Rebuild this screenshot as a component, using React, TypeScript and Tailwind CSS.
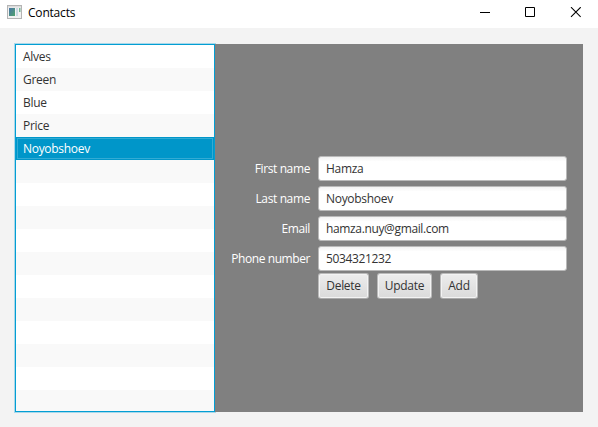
const contacts = ['Alves', 'Green', 'Blue', 'Price', 'Noyobshoev'];
const rows = Array.from({ length: 16 }, (_, i) => contacts[i] ?? '');

const fields = [
  { label: 'First name', value: 'Hamza', track: 'tracking-[-0.38px]', vtrack: 'tracking-[-0.3px]' },
  { label: 'Last name', value: 'Noyobshoev', track: 'tracking-[-0.38px]', vtrack: 'tracking-[-0.3px]' },
  { label: 'Email', value: 'hamza.nuy@gmail.com', track: 'tracking-[-0.38px]', vtrack: 'tracking-[-0.36px]' },
  { label: 'Phone number', value: '5034321232', track: 'tracking-[-0.42px]', vtrack: 'tracking-[-0.36px]' },
];

const buttons = [
  { label: 'Delete', width: 'w-[51px]' },
  { label: 'Update', width: 'w-[55px]' },
  { label: 'Add', width: 'w-[38px]' },
];

function TitleBar() {
  return (
    <header className="flex h-7 shrink-0 items-start bg-white text-black">
      <svg className="ml-[7px] mt-[5px]" width="15" height="14" viewBox="0 0 15 14">
        <defs>
          <linearGradient id="pane" x1="0" y1="0" x2="1" y2="1">
            <stop offset="0" stopColor="#4a74a8" />
            <stop offset="1" stopColor="#4fa36c" />
          </linearGradient>
        </defs>
        <rect x="0.5" y="0.5" width="14" height="13" fill="#f2f2f2" stroke="#b4b4b4" />
        <rect x="1" y="1" width="13" height="1.5" fill="#dcdcdc" />
        <rect x="2" y="3" width="6" height="8" fill="url(#pane)" />
        <rect x="9" y="3" width="2" height="8" fill="#c9d9e2" />
        <rect x="12" y="3" width="1.5" height="4" fill="#74b695" />
      </svg>
      <h1 className="ml-1.5 mt-1 grow leading-[18px] tracking-[-0.2px]">Contacts</h1>
      <svg className="mr-[17px] mt-[7px]" width="101" height="11" viewBox="0 0 101 11" fill="none" stroke="#000">
        <path d="M0 5.5h10M45.5.5h9v9h-9z" />
        <path d="M91 .2l9.7 9.7M100.7.2L91 9.9" strokeWidth="1.1" />
      </svg>
    </header>
  );
}

function ContactList() {
  return (
    <ul className="h-[368px] w-[200px] shrink-0 overflow-hidden border border-[#039ed3] bg-white shadow-[0_0_0_1px_#a9d8ea]">
      {rows.map((name, i) => (
        <li
          key={i}
          className={
            name === 'Noyobshoev'
              ? 'h-[23px] border border-[#0096c9] bg-[#0096c9] text-white'
              : i % 2
                ? 'h-[23px] border border-[#f9f9f9] bg-[#f9f9f9]'
                : 'h-[23px] border border-white bg-white'
          }
        >
          <div
            className={
              name === 'Noyobshoev'
                ? 'h-[21px] border border-[#32abd4] pl-[5px] leading-[19px]'
                : 'h-[21px] border border-transparent pl-[5px] leading-[19px]'
            }
          >
            {name}
          </div>
        </li>
      ))}
    </ul>
  );
}

function ContactForm() {
  return (
    <section className="flex h-[368px] w-[368px] flex-col bg-[#808080] pl-[15px] pr-4 pt-28">
      <div className="flex flex-col gap-[5px]">
        {fields.map((f) => (
          <div key={f.label} className="flex h-[25px] items-center gap-2">
            <label className={`w-20 whitespace-nowrap text-right leading-[25px] text-white ${f.track}`}>{f.label}</label>
            <input
              className={`h-[25px] w-[249px] rounded-[3px] border border-[#b9b9b9] bg-white bg-linear-to-b from-[#f2f2f2] to-white to-20% px-[7px] outline-none ${f.vtrack}`}
              defaultValue={f.value}
            />
          </div>
        ))}
      </div>
      <div className="ml-[88px] mt-0.5 flex gap-2">
        {buttons.map((b) => (
          <button
            key={b.label}
            className={`h-[26px] rounded-[3px] border border-[#bababa] border-b-[#aaaaaa] bg-linear-to-b from-[#ededed] to-[#dadada] leading-6 shadow-[inset_0_0_0_1px_#f3f3f3] ${b.width}`}
          >
            {b.label}
          </button>
        ))}
      </div>
    </section>
  );
}

export default function App() {
  return (
    <div className="flex h-[427px] w-[598px] flex-col overflow-hidden bg-[#f3f3f3] font-['Open_Sans','Noto_Sans',sans-serif] text-[12px] tracking-[-0.3px] text-[#333333]">
      <TitleBar />
      <main className="flex px-[15px] pt-4">
        <ContactList />
        <ContactForm />
      </main>
    </div>
  );
}
